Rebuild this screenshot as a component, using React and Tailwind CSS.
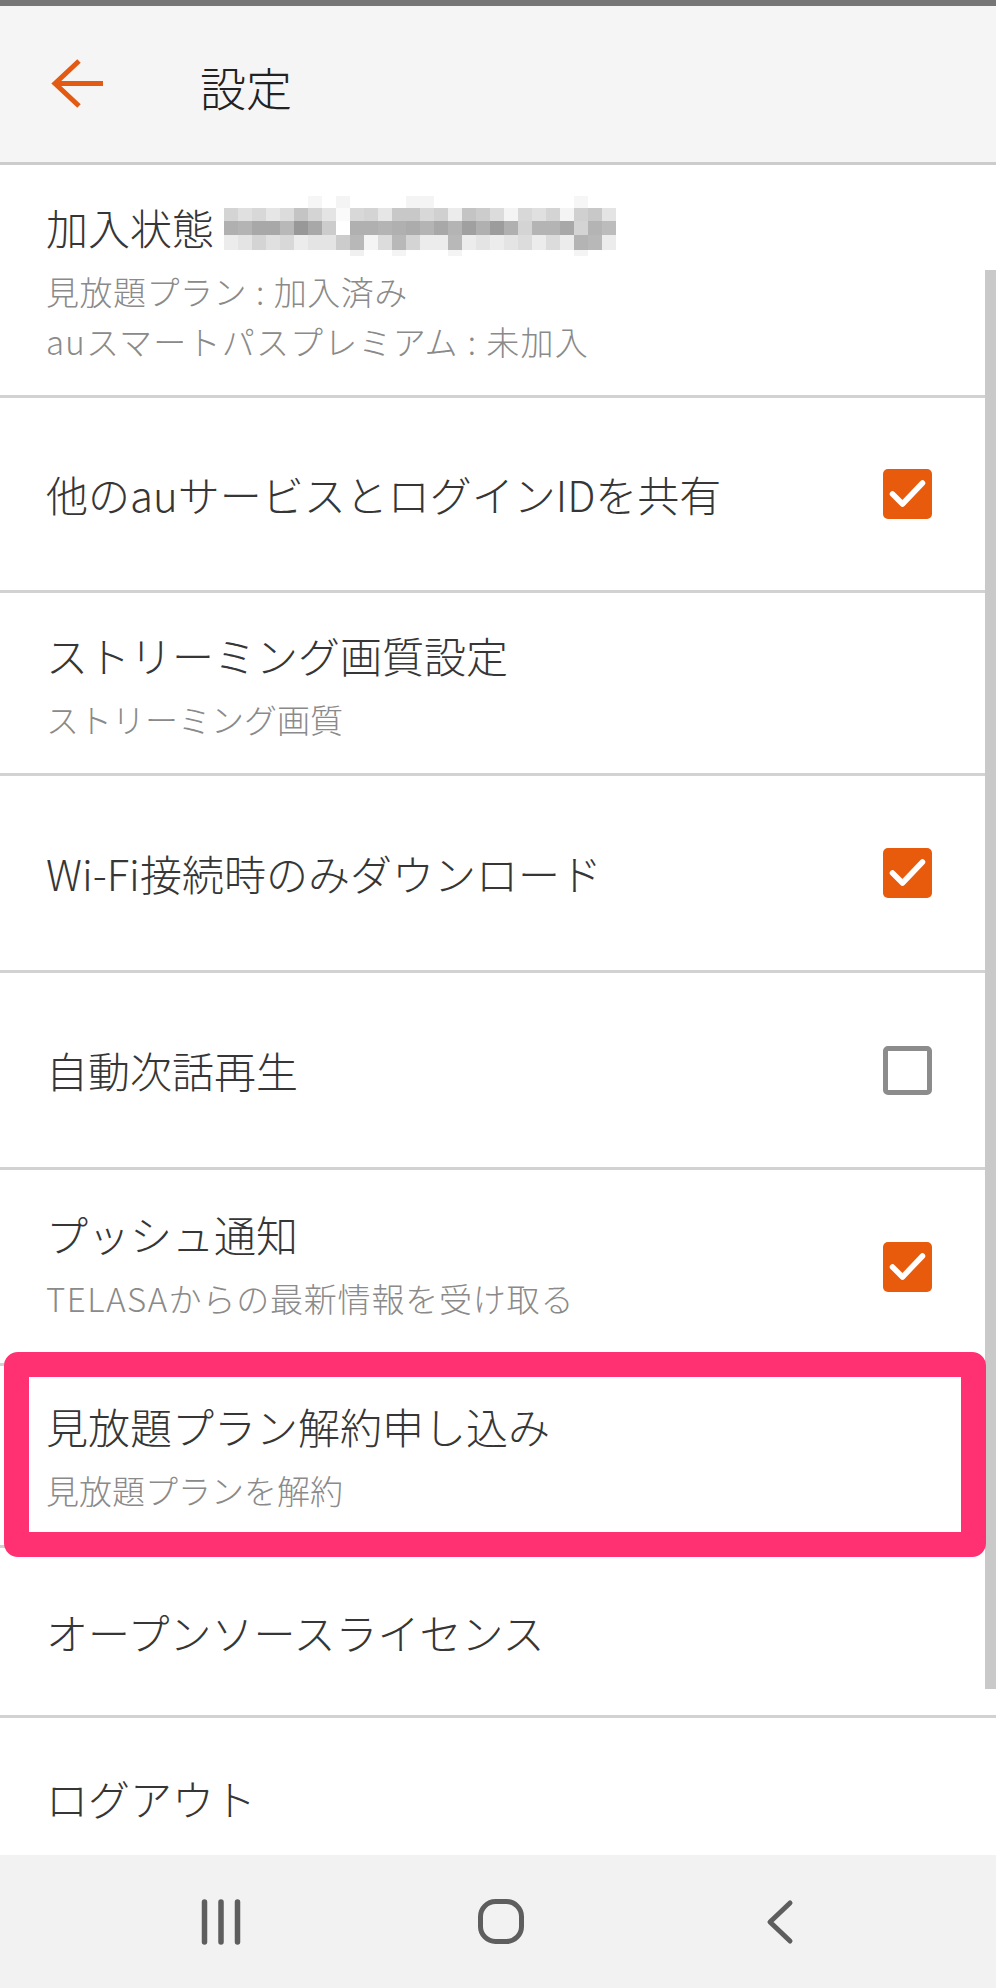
import React from "react";

const mosaic = [
  "ff ff ff ff ff ff f6 ff f4 ff ff ff ff f4 f4 ff ff ff ff ff ff ff ff ff ff f6 ff ff",
  "d4 e0 d8 e6 dc c4 d4 e4 fa d8 d4 e6 c8 c8 d8 d0 ec c4 cc dc f4 d8 e0 d4 f4 d0 c8 e4",
  "b0 b4 a8 a8 b8 98 a8 cc ff b0 b0 b4 b0 ac b4 a8 b4 a0 b0 9c b0 d4 b4 b4 a8 d4 b4 bc",
  "ec e4 d4 e0 d8 ec e4 e4 cc b8 f4 dc b8 d4 ec ec b8 ec e4 ec e4 dc ec dc ec b4 b8 ec",
  "ff ff ff ff ff ff ff ff ff f0 ff ff f4 ff ff ff f4 ff ff ff ff ff ff ff ff f4 ff ff",
].map((r) => r.split(" "));
const rowH = [12, 13, 14, 15, 6];

function Mosaic() {
  const rects = [];
  let y = 0;
  mosaic.forEach((row, ri) => {
    row.forEach((v, ci) => {
      rects.push(
        <rect key={ri + "-" + ci} x={ci * 14} y={y} width={14} height={rowH[ri]} fill={"#" + v + v + v} />
      );
    });
    y += rowH[ri];
  });
  return (
    <svg width="392" height="60" viewBox="0 0 392 60" className="block">
      {rects}
    </svg>
  );
}

function Check({ on }) {
  if (on) {
    return (
      <div className="w-[49px] h-[50px] rounded-[5px] bg-[#e85b0d] shrink-0">
        <svg width="49" height="50" viewBox="0 0 49 50">
          <path d="M9.5 25 L19.5 35 L39.5 14" fill="none" stroke="#ffffff" strokeWidth="5.5" strokeLinecap="round" strokeLinejoin="round" />
        </svg>
      </div>
    );
  }
  return <div className="w-[49px] h-[49px] rounded-[5px] border-[5px] border-[#8c8c8c] shrink-0" />;
}

const title = "text-[42px] leading-[50px] text-[#363636] whitespace-nowrap font-light";
const sub = "text-[33px] leading-[48px] text-[#8a8a8a] whitespace-nowrap font-light";

function Colon() {
  return <span className="mx-[9px]">:</span>;
}

export default function App() {
  return (
    <div className="relative w-[996px] h-[1988px] overflow-hidden bg-white font-['Noto_Sans_CJK_JP',sans-serif] flex flex-col">
      <div className="h-[6px] bg-[#767676] shrink-0" />
      <div className="h-[159px] shrink-0 bg-[#f5f5f5] border-b-[3px] border-[#cccccc] flex items-center">
        <svg width="60" height="60" viewBox="0 0 60 60" className="ml-[48px]">
          <path d="M55 29.5 H7 M31 7 L7 29.5 L31 52" fill="none" stroke="#e35a12" strokeWidth="5" strokeLinecap="butt" strokeLinejoin="miter" />
        </svg>
        <div className="ml-[92px] text-[46px] leading-[56px] text-[#222222] mt-[4px] font-light">設定</div>
      </div>

      {/* Row 1 */}
      <div className="h-[233px] shrink-0 border-b-[3px] border-[#d2d2d2] pl-[46px] pt-[37px] flex flex-col">
        <div className={title + " flex items-center h-[50px]"}>
          <span>加入状態</span>
          <span className="ml-[10px] -my-[5px] -mt-[7px]">
            <Mosaic />
          </span>
        </div>
        <div className={sub + " mt-[15px] tracking-[0.5px]"}>
          見放題プラン<Colon />加入済み
        </div>
        <div className={sub + " mt-[2px] tracking-[1.2px]"}>
          auスマートパスプレミアム<Colon />未加入
        </div>
      </div>

      {/* Row 2 */}
      <div className="h-[195px] shrink-0 border-b-[3px] border-[#d2d2d2] pl-[46px] pr-[64px] flex items-center justify-between">
        <div className={title}>他のauサービスとログインIDを共有</div>
        <Check on />
      </div>

      {/* Row 3 */}
      <div className="h-[183px] shrink-0 border-b-[3px] border-[#d2d2d2] pl-[46px] pt-[37px] flex flex-col">
        <div className={title}>ストリーミング画質設定</div>
        <div className={sub + " mt-[15px]"}>ストリーミング画質</div>
      </div>

      {/* Row 4 */}
      <div className="h-[197px] shrink-0 border-b-[3px] border-[#d2d2d2] pl-[46px] pr-[64px] flex items-center justify-between">
        <div className={title}>Wi-Fi接続時のみダウンロード</div>
        <Check on />
      </div>

      {/* Row 5 */}
      <div className="h-[197px] shrink-0 border-b-[3px] border-[#d2d2d2] pl-[46px] pr-[64px] flex items-center justify-between">
        <div className={title}>自動次話再生</div>
        <Check on={false} />
      </div>

      {/* Row 6 */}
      <div className="h-[196px] shrink-0 border-b-[3px] border-[#d2d2d2] pl-[46px] pr-[64px] flex items-center justify-between">
        <div className="flex flex-col -mt-[2px]">
          <div className={title}>プッシュ通知</div>
          <div className={sub + " mt-[15px] tracking-[0.8px]"}>
            <span className="tracking-[1.5px]">TELASA</span>からの最新情報を受け取る
          </div>
        </div>
        <Check on />
      </div>

      {/* Row 7 */}
      <div className="h-[182px] shrink-0 border-b-[3px] border-[#d2d2d2] pl-[46px] pt-[35px] flex flex-col">
        <div className={title}>見放題プラン解約申し込み</div>
        <div className={sub + " mt-[15px]"}>見放題プランを解約</div>
      </div>

      {/* Row 8 */}
      <div className="h-[170px] shrink-0 border-b-[3px] border-[#d2d2d2] pl-[46px] flex items-center">
        <div className={title}>オープンソースライセンス</div>
      </div>

      {/* Row 9 */}
      <div className="h-[137px] shrink-0 pl-[46px] pt-[55px]">
        <div className={title}>ログアウト</div>
      </div>

      {/* Nav bar */}
      <div className="h-[133px] shrink-0 bg-[#f2f2f2] pl-[82px] grid grid-cols-[279px_279px_279px] items-center">
        <div className="flex justify-center">
          <svg width="44" height="46" viewBox="0 0 44 46">
            <path d="M4.5 3 V43 M21 3 V43 M37.5 3 V43" stroke="#5e5e5e" strokeWidth="5.5" strokeLinecap="round" />
          </svg>
        </div>
        <div className="flex justify-center">
          <svg width="48" height="48" viewBox="0 0 48 48">
            <rect x="3.5" y="3.5" width="41" height="40" rx="15" fill="none" stroke="#5e5e5e" strokeWidth="5" />
          </svg>
        </div>
        <div className="flex justify-center">
          <svg width="30" height="46" viewBox="0 0 30 46">
            <path d="M25 4 L5 23 L25 42" fill="none" stroke="#5e5e5e" strokeWidth="5" strokeLinecap="round" strokeLinejoin="round" />
          </svg>
        </div>
      </div>

      {/* Scrollbar */}
      <div className="absolute right-0 top-[270px] w-[11px] h-[1419px] bg-[#c9c9c9]" />

      {/* Highlight annotation */}
      <div className="absolute left-[4px] top-[1352px] w-[982px] h-[205px] border-[25px] border-[#ff3172] rounded-[14px]" />
    </div>
  );
}
